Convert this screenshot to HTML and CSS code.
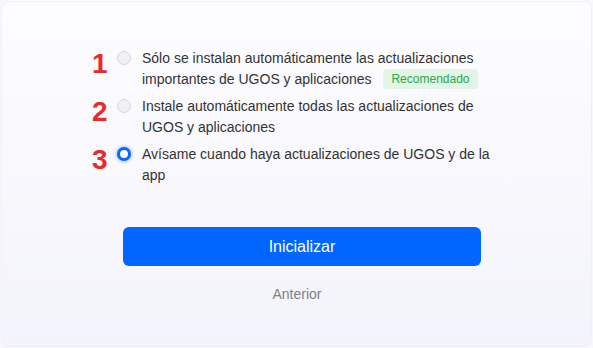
FILE: index.html
```html
<!DOCTYPE html>
<html lang="es">
<head>
    <meta charset="UTF-8">
    <title>Actualizaciones</title>
    <link rel="stylesheet" href="styles.css">
</head>
<body>

    <div class="card">
        <div class="content">
            <div class="options">
                <label class="option">
                    <span class="num">1</span>
                    <input type="radio" name="update" class="radio">
                    <span class="text">Sólo se instalan automáticamente las actualizaciones importantes de UGOS y aplicaciones <span class="badge">Recomendado</span></span>
                </label>
                <label class="option">
                    <span class="num">2</span>
                    <input type="radio" name="update" class="radio">
                    <span class="text">Instale automáticamente todas las actualizaciones de UGOS y aplicaciones</span>
                </label>
                <label class="option">
                    <span class="num">3</span>
                    <input type="radio" name="update" class="radio" checked>
                    <span class="text">Avísame cuando haya actualizaciones de UGOS y de la app</span>
                </label>
            </div>

            <button class="btn-primary">Inicializar</button>
            <a class="back" href="#">Anterior</a>
        </div>
    </div>

</body>
</html>
```

FILE: styles.css
```css
html, body {
    margin: 0;
    height: 100%;
}
body {
    font-family: "Liberation Sans", Arial, sans-serif;
    background: #f7f7fc;
}
.card {
    box-sizing: border-box;
    height: 346px;
    margin: 1px 1px 0 1px;
    padding-left: 11px;
    border: 1px solid #f0f0f9;
    border-radius: 8px;
    background: linear-gradient(180deg, #fdfdff 0%, #f8f8fd 50%, #f3f3fb 100%);
}
.content {
    width: 358px;
    margin: 0 auto;
    padding-top: 46px;
    display: flex;
    flex-direction: column;
}
.options {
    display: flex;
    flex-direction: column;
    gap: 6px;
    margin-left: -31px;
    margin-right: -16px;
}
.option {
    display: flex;
    align-items: flex-start;
    font-size: 14px;
    line-height: 21px;
    color: #333;
}
.num {
    width: 25px;
    flex: none;
    font-size: 28px;
    font-weight: bold;
    line-height: 21px;
    color: #e52b2b;
    padding-top: 5px;
}
.radio {
    appearance: none;
    -webkit-appearance: none;
    flex: none;
    box-sizing: border-box;
    width: 14px;
    height: 14px;
    margin: 3px 11px 0 0;
    border: 1px solid #d6d6de;
    border-radius: 50%;
    background: #f1f1f5;
}
.radio:checked {
    border: 3.5px solid #0a66ff;
    background: #fff;
    box-shadow: 0 0 3px 1px rgba(10, 102, 255, 0.35);
}
.text {
    flex: 1;
}
.badge {
    display: inline-block;
    vertical-align: middle;
    margin: -2px 0 0 8px;
    padding: 1px 8px;
    font-size: 12px;
    line-height: 18px;
    color: #2aa84a;
    background: #e2f5e7;
    border-radius: 4px;
}
.btn-primary {
    margin-top: 41px;
    height: 39px;
    border: none;
    border-radius: 6px;
    background: #0066ff;
    color: #fff;
    font-family: inherit;
    font-size: 16px;
}
.back {
    margin-top: 20px;
    padding-right: 10px;
    text-align: center;
    font-size: 14px;
    color: #808088;
    text-decoration: none;
}
```
